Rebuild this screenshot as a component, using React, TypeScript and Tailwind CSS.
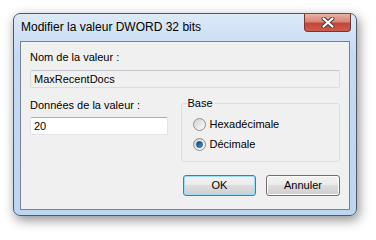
import React from 'react';

const font = { fontFamily: '"Liberation Sans", Arial, sans-serif' };

function CloseGlyph() {
  return (
    <svg width="14" height="11" viewBox="0 0 14 11">
      <path d="M2.5 1.5 L11.5 9.5 M11.5 1.5 L2.5 9.5" stroke="#3d3d3d" strokeWidth="4" strokeLinecap="round" />
      <path d="M2.5 1.5 L11.5 9.5 M11.5 1.5 L2.5 9.5" stroke="#ffffff" strokeWidth="2.2" strokeLinecap="round" />
    </svg>
  );
}

function Radio({ label, checked }: { label: string; checked?: boolean }) {
  return (
    <div className="flex items-center h-[13px] gap-[4px]">
      <div className="w-[13px] h-[13px] rounded-full border border-[#8e8f8f] bg-[linear-gradient(135deg,#d2d2d2,#fbfbfb)] flex items-center justify-center">
        {checked && (
          <div className="w-[7px] h-[7px] rounded-full border border-[#1d4f82] bg-[linear-gradient(135deg,#0d3f78,#3fa2e6)]" />
        )}
      </div>
      <span className="text-[11px] leading-[13px] text-black">{label}</span>
    </div>
  );
}

export default function App() {
  return (
    <div className="w-[376px] h-[236px] bg-white pt-[13px] pl-[13px]" style={font}>
      <div className="w-[344px] h-[203px] rounded-[7px] border border-[#4f5a66] bg-[linear-gradient(to_bottom,#dce9f7,#c6dbf3_40px,#bcd5f1)] shadow-[2px_4px_12px_rgba(0,0,0,0.45)] flex flex-col">
        {/* title bar */}
        <div className="h-[27px] flex items-start">
          <div className="flex-1 self-center pl-[7px] text-[12px] leading-[15px] text-black">
            Modifier la valeur DWORD 32 bits
          </div>
          <div className="mr-[5px] w-[47px] h-[18px] rounded-b-[4px] border border-t-0 border-[#6b3a36] bg-[linear-gradient(to_bottom,#eab2a8,#d98476_45%,#c24636_55%,#cd5d4f)] flex items-center justify-center">
            <CloseGlyph />
          </div>
        </div>

        {/* client area */}
        <div className="flex-1 mx-[6px] mb-[5px] border border-[#71829a] bg-[#f0f0f0] px-[9px] pt-[9px] text-[11px] text-black">
          <div className="leading-[13px]">Nom de la valeur :</div>
          <div className="mt-[6px] h-[18px] border border-[#d9dce2] border-t-[#c3c6cc] bg-[#f0f0f0] rounded-[2px] px-[3px] flex items-center leading-[13px]">
            MaxRecentDocs
          </div>

          <div className="mt-[9px] flex gap-[13px]">
            <div className="w-[138px] pt-[2px]">
              <div className="leading-[13px]">Données de la valeur :</div>
              <div className="mt-[5px] h-[18px] border border-[#e2e3ea] border-t-[#abadb3] bg-white rounded-[2px] px-[3px] flex items-center leading-[13px]">
                20
              </div>
            </div>
            <fieldset className="w-[160px] h-[65px] border border-[#d5dfe5] rounded-[3px] flex flex-col">
              <legend className="ml-[5px] px-[1px] leading-[13px]">Base</legend>
              <div className="mt-[8px] ml-[11px] flex flex-col gap-[7px]">
                <Radio label="Hexadécimale" />
                <Radio label="Décimale" checked />
              </div>
            </fieldset>
          </div>

          <div className="mt-[13px] flex justify-end gap-[10px]">
            <button className="w-[73px] h-[21px] rounded-[3px] border border-[#3c7fb1] bg-[linear-gradient(to_bottom,#f2f2f2,#ebebeb_50%,#dddddd_50%,#cfcfcf)] shadow-[inset_0_0_0_1px_#9fdcf8] text-[11px] leading-[13px] text-black">
              OK
            </button>
            <button className="w-[74px] h-[21px] rounded-[3px] border border-[#707070] bg-[linear-gradient(to_bottom,#f2f2f2,#ebebeb_50%,#dddddd_50%,#cfcfcf)] shadow-[inset_0_0_0_1px_#fbfbfb] text-[11px] leading-[13px] text-black">
              Annuler
            </button>
          </div>
        </div>
      </div>
    </div>
  );
}
